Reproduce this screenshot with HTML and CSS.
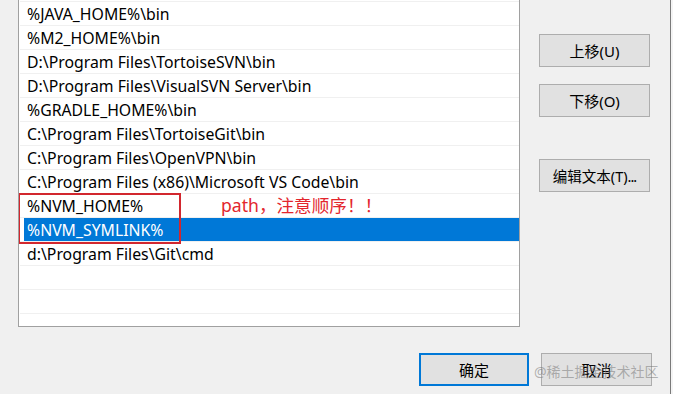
FILE: index.html
```html
<!DOCTYPE html>
<html lang="zh-CN">

<head>
    <meta charset="UTF-8">
    <title>编辑环境变量</title>
    <link rel="stylesheet" href="styles.css">
</head>

<body>
    <div class="dialog">
        <div class="main">
            <div class="path_list">
                <div class="row">%JAVA_HOME%\bin</div>
                <div class="row">%M2_HOME%\bin</div>
                <div class="row">D:\Program Files\TortoiseSVN\bin</div>
                <div class="row">D:\Program Files\VisualSVN Server\bin</div>
                <div class="row">%GRADLE_HOME%\bin</div>
                <div class="row">C:\Program Files\TortoiseGit\bin</div>
                <div class="row">C:\Program Files\OpenVPN\bin</div>
                <div class="row">C:\Program Files (x86)\Microsoft VS Code\bin</div>
                <div class="row">%NVM_HOME%</div>
                <div class="row selected"><span>%NVM_SYMLINK%</span></div>
                <div class="row">d:\Program Files\Git\cmd</div>
                <div class="row"></div>
                <div class="row"></div>
                <div class="row"></div>

                <div class="mark_box"></div>
                <div class="note">path，注意顺序！！</div>
            </div>

            <div class="side_btns">
                <button class="btn">上移(U)</button>
                <button class="btn">下移(O)</button>
                <button class="btn edit_btn">编辑文本(T)<span class="dots">...</span></button>
            </div>
        </div>

        <div class="footer">
            <button class="btn ok_btn">确定</button>
            <button class="btn">取消</button>
            <span class="watermark">@稀土掘金技术社区</span>
        </div>
    </div>
    <div class="behind"></div>
</body>

</html>
```

FILE: styles.css
```css
body {
    margin: 0;
    background-color: #f0f0f0;
    font-family: "Noto Sans", "Noto Sans CJK SC", sans-serif;
    color: #000;
    display: flex;
    height: 394px;
    overflow: hidden;
}

.dialog {
    width: 670px;
    border-right: 1px solid #7a7a7a;
    position: relative;
}

.behind {
    flex: 1;
    background-color: #f4f4f4;
}

.main {
    display: flex;
}

.path_list {
    position: relative;
    margin-left: 18px;
    width: 502px;
    height: 327px;
    padding-top: 1px;
    box-sizing: border-box;
    background-color: #fff;
    border: 1px solid #a0a0a0;
    border-top: none;
    overflow: hidden;
}

.row {
    height: 23px;
    margin-left: 1px;
    border-top: 1px solid #f0f0f0;
    font-size: 15.8px;
    line-height: 24px;
    padding-left: 7px;
    white-space: nowrap;
}

.row.selected {
    background: linear-gradient(to right, #fff 4px, #0078d7 4px);
    color: #fff;
}

.mark_box {
    position: absolute;
    left: -1px;
    top: 193px;
    width: 163px;
    height: 51px;
    box-sizing: border-box;
    border: 2px solid #d2272e;
}

.note {
    position: absolute;
    left: 202px;
    top: 193px;
    font-size: 17.6px;
    color: #e3262d;
    line-height: 24px;
}

.side_btns {
    display: flex;
    flex-direction: column;
    margin-left: 19px;
    padding-top: 34px;
}

.btn {
    width: 111px;
    height: 33px;
    background-color: #e1e1e1;
    border: 1px solid #adadad;
    font-family: "Noto Sans", "Noto Sans CJK SC", sans-serif;
    font-size: 15px;
    color: #000;
    padding: 0;
    margin-bottom: 17px;
}

.edit_btn {
    margin-top: 25px;
    font-size: 14.5px;
}

.dots {
    letter-spacing: -1px;
}

.footer {
    display: flex;
    gap: 12px;
    margin-top: 26px;
    padding-left: 419px;
    position: relative;
}

.footer .btn {
    margin-bottom: 0;
}

.ok_btn {
    width: 110px;
    border: 2px solid #0078d7;
}

.watermark {
    position: absolute;
    left: 534px;
    top: 8px;
    font-size: 14px;
    color: rgba(120, 120, 120, 0.55);
    white-space: nowrap;
}
```
